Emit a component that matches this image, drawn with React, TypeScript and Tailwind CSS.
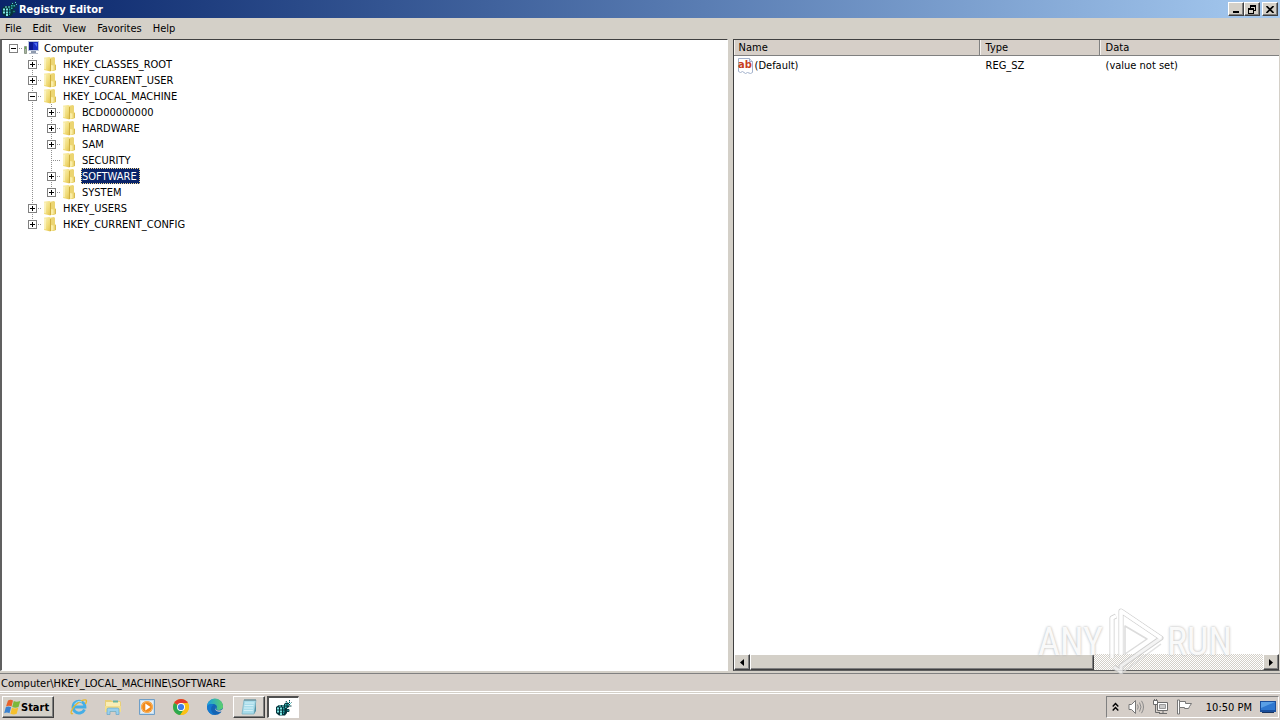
import React from "react";

const raised =
  "border border-t-white border-l-white border-r-[#404040] border-b-[#404040] shadow-[inset_-1px_-1px_0_#808080]";

function RegCubes({ size = 16 }: { size?: number }) {
  return (
    <svg width={size} height={size} viewBox="0 0 16 16" className="shrink-0" aria-hidden="true">
      <path d="M0 7l3-2h7l1 2v6l-2 2.500H3L0 13z" fill="#04323a" />
      <path d="M1 7.500h2v2H1zM4 7.500h2v2H4zM1 10.500h2v2H1zM4 10.500h2v2H4zM4 13h2v2H4zM3 5.500h2v1H3zM6 5.500h2v1H6z" fill="#7ce6e3" />
      <path d="M7 7.500h1.500v2H7zM7 10.500h1.500v2H7zM7 13h1v1H7z" fill="#26a5a8" />
      <path d="M8 4l2-1.500 3 .5v4l-3 2-2-1z" fill="#063a40" />
      <path d="M9 4h1.500v1.500H9zM11.500 4H13v1.500h-1.500zM9 6.500h1.500V8H9z" fill="#35b2b2" />
      <path d="M10 1l1 2M13.500 0v3M15.500 2.500L13 5M15.500 6H13M11 9.500h2v2h-2z" stroke="#08444a" fill="#38b5b5" />
      <path d="M13 1h1v1h-1zM10 2h1v1h-1zM14 3h1v1h-1z" fill="#62cfcf" />
    </svg>
  );
}

function ComputerIcon() {
  return (
    <svg width="17" height="16" viewBox="0 0 17 16" className="shrink-0" aria-hidden="true">
      <path d="M1.500 6.500h2v7h-2z" fill="#a9b59f" stroke="#8d9a88" />
      <path d="M2 7h1v2H2z" fill="#5fae4a" />
      <path d="M5 1h11v10H5z" fill="#bcc7dd" />
      <path d="M6 2h9v8H6z" fill="#1a2fc0" />
      <path d="M6 2h4v8H6z" fill="#0c1a92" />
      <path d="M11 3l3 0v4z" fill="#4f6ff0" />
      <path d="M8 11h5v2H8z" fill="#8d99ad" />
      <path d="M6 13h9v1H6z" fill="#b5bdc9" />
    </svg>
  );
}

function FolderIcon() {
  return (
    <svg width="16" height="16" viewBox="0 0 16 16" className="shrink-0" aria-hidden="true">
      <defs>
        <linearGradient id="fold" x1="0" x2="1" y1="0" y2="1">
          <stop offset="0" stopColor="#fbf3bd" />
          <stop offset="0.600" stopColor="#f1dc79" />
          <stop offset="1" stopColor="#e0c04c" />
        </linearGradient>
      </defs>
      <path d="M7 2l5-1 1 1v6l1 1v5l-2 1H7z" fill="#ecd572" />
      <path d="M2 1.500L7.500 1l1 1v13.500L2 14z" fill="url(#fold)" />
      <path d="M9 9l2.500 .5v4.500L9 15z" fill="#faeea8" />
      <path d="M8.500 3v12" stroke="#d0b040" fill="none" />
      <path d="M13.500 9v5" stroke="#d8bb52" />
      <path d="M3 3v10" stroke="#fefad8" />
    </svg>
  );
}

type Expander = "plus" | "minus" | "none";

function Guide({ up = true, down = true, branch = true, box = "none" }: {
  up?: boolean; down?: boolean; branch?: boolean; box?: Expander;
}) {
  return (
    <svg width="19" height="16" viewBox="0 0 19 16" className="block shrink-0" shapeRendering="crispEdges" aria-hidden="true">
      <g stroke="#909090" strokeDasharray="1 1" fill="none">
        {up && <path d="M9.500 0V8" />}
        {down && <path d="M9.500 8V16" />}
        {branch && <path d="M9 8.500H19" />}
      </g>
      {box !== "none" && (
        <>
          <path d="M5.500 4.500h8v8h-8z" fill="#fff" stroke="#808080" />
          <path d="M7 8.500h5" stroke="#000" />
          {box === "plus" && <path d="M9.500 6v5" stroke="#000" />}
        </>
      )}
    </svg>
  );
}

const nodes: { name: string; level: number; box: Expander; last?: boolean; selected?: boolean }[] = [
  { name: "Computer", level: 0, box: "minus" },
  { name: "HKEY_CLASSES_ROOT", level: 1, box: "plus" },
  { name: "HKEY_CURRENT_USER", level: 1, box: "plus" },
  { name: "HKEY_LOCAL_MACHINE", level: 1, box: "minus" },
  { name: "BCD00000000", level: 2, box: "plus" },
  { name: "HARDWARE", level: 2, box: "plus" },
  { name: "SAM", level: 2, box: "plus" },
  { name: "SECURITY", level: 2, box: "none" },
  { name: "SOFTWARE", level: 2, box: "plus", selected: true },
  { name: "SYSTEM", level: 2, box: "plus", last: true },
  { name: "HKEY_USERS", level: 1, box: "plus" },
  { name: "HKEY_CURRENT_CONFIG", level: 1, box: "plus", last: true },
];

function Tree() {
  return (
    <ul role="tree" aria-label="Registry keys" className="pl-[2px]">
      {nodes.map((n) => (
        <li key={n.name} role="treeitem" aria-selected={!!n.selected} aria-level={n.level + 1} className="flex h-4 items-center">
          {n.level > 0 && <span className="w-[19px] shrink-0" />}
          {n.level > 1 && <Guide branch={false} />}
          {n.box === "none" ? (
            <Guide />
          ) : (
            <button type="button" aria-label={`Toggle ${n.name}`} className="shrink-0">
              <Guide box={n.box} up={n.level > 0} down={n.level > 0 && !n.last} />
            </button>
          )}
          <span className="w-[19px] shrink-0">{n.level === 0 ? <ComputerIcon /> : <FolderIcon />}</span>
          <span
            className={
              n.selected
                ? "ml-px h-4 border border-dotted border-[#f5db95] bg-[#0a246a] pr-[2px] leading-4 text-white"
                : "ml-px h-4 border border-transparent pr-[2px] leading-4"
            }
          >
            {n.name}
          </span>
        </li>
      ))}
    </ul>
  );
}

function StringValueIcon() {
  return (
    <svg width="17" height="16" viewBox="0 0 17 16" className="shrink-0" aria-hidden="true">
      <path d="M1.500 .5h11l3 3v11l-2 1-3-1-2 1-3-2-2 1-2-1z" fill="#fff" stroke="#a3b2cc" />
      <path d="M12.500 .5v3h3" fill="#dfe6f2" stroke="#a3b2cc" />
      <text x="1" y="10" fontSize="11" fontWeight="700" fontFamily="DejaVu Sans Condensed, sans-serif" fill="#c8401f">ab</text>
    </svg>
  );
}

const cols = ["Name", "Type", "Data"];

function Values() {
  return (
    <table className="w-full table-fixed border-separate border-spacing-0 text-left">
      <colgroup>
        <col className="w-[246px]" />
        <col className="w-[120px]" />
        <col />
      </colgroup>
      <thead>
        <tr className="bg-[#d6cfc8]">
          {cols.map((c) => (
            <th
              key={c}
              scope="col"
              className="h-4 border-r border-b border-r-[#808080] border-b-[#808080] p-0 pt-px pl-[6px] leading-[14px] font-normal shadow-[inset_1px_0_0_#f4f1ed] first:pl-[5px] last:border-r-0"
            >
              {c}
            </th>
          ))}
        </tr>
      </thead>
      <tbody>
        <tr>
          <td className="p-0 pt-px pl-[3px]">
            <span className="flex items-center gap-px leading-[18px]"><StringValueIcon />(Default)</span>
          </td>
          <td className="p-0 pt-px pl-[6px] leading-[18px]">REG_SZ</td>
          <td className="p-0 pt-px pl-[6px] leading-[18px]">(value not set)</td>
        </tr>
      </tbody>
    </table>
  );
}

function ScrollBar() {
  const dither =
    "bg-[#fff] bg-[repeating-conic-gradient(#d4d0c8_0_25%,#ffffff_0_50%)] bg-[length:2px_2px]";
  return (
    <div className={`flex h-4 shrink-0 ${dither}`}>
      <button type="button" aria-label="Scroll left" className={`grid w-4 shrink-0 place-items-center bg-[#d4d0c8] ${raised}`}>
        <svg width="4" height="7" viewBox="0 0 4 7"><path d="M4 0v7L0 3.500z" /></svg>
      </button>
      <div className="flex min-w-0 flex-1">
        <div className={`w-[67%] bg-[#d4d0c8] ${raised}`} />
      </div>
      <button type="button" aria-label="Scroll right" className={`grid w-4 shrink-0 place-items-center bg-[#d4d0c8] ${raised}`}>
        <svg width="4" height="7" viewBox="0 0 4 7"><path d="M0 0v7l4-3.500z" /></svg>
      </button>
    </div>
  );
}

function Watermark() {
  const word =
    "pt-[4px] font-['Liberation_Sans_Narrow','Roboto_Condensed','Roboto',sans-serif] text-[38px] leading-[60px] text-white/90 [text-shadow:0_0_2px_#b4b4b4,0_0_3px_#c8c8c8]";
  return (
    <div className="pointer-events-none absolute right-[48px] bottom-[46px] flex items-center opacity-80">
      <span className={word}>ANY</span>
      <svg width="64" height="68" viewBox="0 0 64 68" fill="none" strokeLinejoin="round" aria-hidden="true">
        <g stroke="#c4c4c4" strokeWidth="5">
          <path d="M13 10L9 12V52" />
          <path d="M18 49V5L58 32 18 60V66L11 61" />
        </g>
        <path d="M18 49V5L58 32 18 60V66L11 61" stroke="#f2f2f2" strokeWidth="3" />
        <path d="M13 10L9 12V52M18 49V5L58 32" stroke="#ffffff" strokeWidth="3.500" />
        <path d="M22 20l22 13-22 15z" stroke="#d4d4d4" strokeWidth="1.500" />
        <path d="M20 66l38-28" stroke="#dadada" strokeWidth="1.500" />
      </svg>
      <span className={word}>RUN</span>
    </div>
  );
}

function WindowsFlag() {
  return (
    <svg width="17" height="16" viewBox="0 0 17 16" className="shrink-0" aria-hidden="true">
      <path d="M4 1.500q2.500-1.500 5 0L7.500 7.500q-2.500-1.500-5.500 0z" fill="#e8622a" />
      <path d="M9.800 2q2.500 1.500 6.500 0L14.500 8q-3 1.500-6.300 0z" fill="#7cb83a" />
      <path d="M1.800 8.300q2.500-1.500 5.300 0l-1.600 6q-2.500-1.500-5.300 0z" fill="#3b82d0" />
      <path d="M8 8.800q2.500 1.500 6.300 0l-1.600 6q-3 1.500-6.300 0z" fill="#f6c02c" />
    </svg>
  );
}

function IeIcon() {
  return (
    <svg width="18" height="18" viewBox="0 0 18 18" aria-hidden="true">
      <path d="M14.500 11.500A6 6 0 1 1 15 9H4.500" fill="none" stroke="#45aee6" strokeWidth="2.800" />
      <path d="M3 15.500C-.5 17 1 11 6 6.500S16.500 .5 16.500 3c0 1-.5 2-1 3" fill="none" stroke="#e7b92f" strokeWidth="1.300" />
      <path d="M4.500 6.500A5.500 5.500 0 0 1 12 4" fill="none" stroke="#a5dcf8" />
    </svg>
  );
}

function ExplorerIcon() {
  return (
    <svg width="18" height="18" viewBox="0 0 18 18" aria-hidden="true">
      <path d="M1 2h6l1 1h8l1 1v10H1z" fill="#e8cf78" />
      <path d="M2 4h14v9H2z" fill="#f9edb5" />
      <path d="M9 2.500h5v2H9z" fill="#67b3a0" />
      <path d="M1 8h16v6H1z" fill="#f3de8c" />
      <path d="M3 16.500v-5q0-1.500 1.500-1.500h9q1.500 0 1.500 1.500v5h-3v-3H6v3z" fill="#9ad0ec" stroke="#5a9fc8" strokeWidth=".6" />
    </svg>
  );
}

function PlayerIcon() {
  return (
    <svg width="18" height="18" viewBox="0 0 18 18" aria-hidden="true">
      <path d="M1.500 1.500h15v15h-15z" fill="#c5def0" stroke="#6f9fc8" />
      <path d="M3 3h12v12H3z" fill="#e6eef4" />
      <circle cx="9" cy="9" r="6" fill="#f18a1b" />
      <circle cx="9" cy="9" r="5.300" fill="none" stroke="#fbb864" />
      <path d="M7.300 5.500v7L12.500 9z" fill="#fff" />
    </svg>
  );
}

function ChromeIcon() {
  return (
    <svg width="18" height="18" viewBox="0 0 18 18" aria-hidden="true">
      <circle cx="9" cy="9" r="8" fill="#fbc116" />
      <path d="M9 9L2.100 5a8 8 0 0 1 13.800 0z" fill="#e33b2e" />
      <path d="M2.100 5A8 8 0 0 0 8.300 17L12.500 11 9 9z" fill="#2da94f" />
      <path d="M9 5h6.900A8 8 0 0 1 8.300 17L12 11z" fill="#fbc116" />
      <circle cx="9" cy="9" r="4" fill="#fff" />
      <circle cx="9" cy="9" r="3.100" fill="#3f7de8" />
    </svg>
  );
}

function EdgeIcon() {
  return (
    <svg width="18" height="18" viewBox="0 0 18 18" aria-hidden="true">
      <defs>
        <linearGradient id="edge" x1="0" x2="1">
          <stop offset="0" stopColor="#1b9de2" />
          <stop offset="1" stopColor="#5cd06a" />
        </linearGradient>
      </defs>
      <circle cx="9" cy="9" r="8" fill="#1464b4" />
      <path d="M1 9a8 8 0 0 1 16-1c.3 3-2 4-4.500 4-2 0-2.500-.8-2-1.500C12 8 9.500 6 7 6 4 6 1.500 7 1 9z" fill="url(#edge)" />
      <path d="M1 9c1-3.500 5-3.500 7-2-4 1-4 7 1 10A8 8 0 0 1 1 9z" fill="#1479cf" />
      <path d="M9.500 8.500c-1.200 2 .5 4.200 4 4 1.500 0 2.500-.7 3.500-1.500V14l-2-.6c-3 .9-6-.9-6-3z" fill="#d5cec8" />
    </svg>
  );
}

function NotepadIcon() {
  return (
    <svg width="18" height="18" viewBox="0 0 18 18" aria-hidden="true">
      <path d="M4 2h12l-2 14H2z" fill="#a8dcea" stroke="#7fb4c4" strokeWidth=".8" />
      <path d="M5 5h9M4.500 7.500h9M4 10h9M3.800 12.500h9" stroke="#d3f0f7" />
      <path d="M4.500 2h11" stroke="#5b7f88" strokeWidth="2" strokeDasharray="1 1" />
      <path d="M14 16l2-12v9z" fill="#4f93a8" />
    </svg>
  );
}

function TrayIcons() {
  return (
    <>
      <button type="button" aria-label="Show hidden icons" className="mr-[9px]">
        <svg width="7" height="10" viewBox="0 0 7 10" fill="none" stroke="#000" strokeWidth="1.400" className="block">
          <path d="M.7 4.500l2.800-3 2.800 3M.7 8.500l2.800-3 2.800 3" />
        </svg>
      </button>
      <button type="button" aria-label="Volume" className="mr-[7px]">
        <svg width="17" height="16" viewBox="0 0 17 16" className="block" fill="none" stroke="#8a8a8a">
          <path d="M1 5.500h2.500L7.500 1.500v13l-4-4H1z" fill="#fff" stroke="#777" />
          <path d="M9.500 5.500q1.500 2.500 0 5M11.500 3.500q3 4.500 0 9M13.500 1.800q4 6.200 0 12.400" />
        </svg>
      </button>
      <button type="button" aria-label="Network" className="mr-[7px]">
        <svg width="17" height="16" viewBox="0 0 17 16" className="block" fill="none" stroke="#6b6b6b">
          <path d="M5.500 3.500h10v8h-10z" fill="#fff" />
          <path d="M7.500 5.500h6v4h-6z" fill="#c9c9c9" stroke="#999" />
          <path d="M7 14.500h8M11 12v2" />
          <path d="M1.500 1.500h4v4h-4z" fill="#fff" />
          <path d="M2.500 0v2M4.500 0v2M3.500 6v7.500H8" />
        </svg>
      </button>
      <button type="button" aria-label="Action Center" className="mr-[13px]">
        <svg width="17" height="16" viewBox="0 0 17 16" className="block" stroke="#777">
          <path d="M1.500 1h2v14h-2z" fill="#fff" />
          <path d="M3.500 2.500h6v2h6l-2 3-1 2h-4V8.500h-5z" fill="#fff" />
        </svg>
      </button>
    </>
  );
}

const windowButton = `grid h-[14px] w-4 place-items-center bg-[#d4d0c8] ${raised}`;

export default function App() {
  return (
    <div className="relative flex h-screen flex-col overflow-hidden bg-[#d4d0c8] font-['DejaVu_Sans_Condensed','DejaVu_Sans',sans-serif] text-[11px] leading-[14px] text-black">
      <header className="flex h-[18px] shrink-0 items-center bg-linear-to-r from-[#0a246a] to-[#a6caf0] pr-[2px] pl-[2px]">
        <RegCubes />
        <h1 className="ml-px flex-1 pt-[2px] font-bold text-white">Registry Editor</h1>
        <button type="button" aria-label="Minimize" className={windowButton}>
          <svg width="9" height="8" viewBox="0 0 9 8"><path d="M1 6h6v2H1z" /></svg>
        </button>
        <button type="button" aria-label="Restore" className={windowButton}>
          <svg width="10" height="9" viewBox="0 0 10 9" shapeRendering="crispEdges">
            <path d="M3 0h6v6H7V5h1V2H4v1H3zM1 3h6v6H1zm1 2v3h4V5z" fillRule="evenodd" />
          </svg>
        </button>
        <button type="button" aria-label="Close" className={`ml-[2px] ${windowButton}`}>
          <svg width="8" height="7" viewBox="0 0 8 7"><path d="M.5 0l7 7M7.500 0l-7 7" stroke="#000" strokeWidth="1.600" /></svg>
        </button>
      </header>

      <nav aria-label="Menu bar" className="flex h-5 shrink-0 items-center pt-[2px]">
        {["File", "Edit", "View", "Favorites", "Help"].map((m) => (
          <button key={m} type="button" className="pr-[6px] pl-[5px]">{m}</button>
        ))}
      </nav>

      <main className="grid min-h-0 flex-1 grid-cols-[727fr_547fr] gap-[5px] pt-px">
        <section className="min-w-0 overflow-hidden border-t border-r border-b border-l-2 border-t-[#404040] border-r-white border-b-white border-l-[#606060] bg-white">
          <Tree />
        </section>
        <section className="flex min-w-0 flex-col border-t border-r border-b border-l border-t-[#404040] border-r-[#d4d0c8] border-b-[#606060] border-l-[#404040] bg-white">
          <div className="min-h-0 flex-1 overflow-hidden"><Values /></div>
          <ScrollBar />
        </section>
      </main>

      <div role="status" className="mt-[2px] h-[19px] shrink-0 border-t border-t-[#808080] border-b border-b-white bg-[#d6cfc9] pl-px leading-[19px]">
        Computer\HKEY_LOCAL_MACHINE\SOFTWARE
      </div>

      <footer className="mt-px flex h-[27px] shrink-0 items-center border-t border-t-white bg-[#d5cec8] pr-px pl-[2px]">
        <button type="button" className={`flex h-[22px] w-[52px] shrink-0 items-center bg-[#d4d0c8] pl-px text-[11px] font-bold ${raised}`}>
          <WindowsFlag /><span className="pt-px">Start</span>
        </button>
        <div className="ml-4 flex items-center gap-4">
          <button type="button" aria-label="Internet Explorer"><IeIcon /></button>
          <button type="button" aria-label="Windows Explorer"><ExplorerIcon /></button>
          <button type="button" aria-label="Media Player"><PlayerIcon /></button>
          <button type="button" aria-label="Chrome"><ChromeIcon /></button>
          <button type="button" aria-label="Edge"><EdgeIcon /></button>
        </div>
        <button type="button" aria-label="Notepad" className={`ml-[9px] grid h-[22px] w-8 place-items-center bg-[#d9d4ce] ${raised}`}>
          <NotepadIcon />
        </button>
        <button
          type="button"
          aria-label="Registry Editor"
          className="ml-[2px] grid h-[22px] w-8 place-items-center border-t-2 border-r border-b border-l-2 border-t-[#505050] border-r-white border-b-white border-l-[#505050] bg-white"
        >
          <RegCubes />
        </button>
        <div className="ml-auto flex h-[22px] items-center border border-t-[#808080] border-r-white border-b-white border-l-[#808080] pr-[2px] pl-[5px]">
          <TrayIcons />
          <time className="mr-[8px] pt-[2px]">10:50 PM</time>
          <button type="button" aria-label="Show desktop">
            <svg width="16" height="14" viewBox="0 0 16 14" className="block">
              <path d="M0 1h16v11H0z" fill="#1b4f9c" />
              <path d="M1 2h14v8H1z" fill="#2f78d0" />
              <path d="M1 2h14L1 8z" fill="#5aa0e6" />
              <path d="M2 12h12v1H2z" fill="#18335f" />
            </svg>
          </button>
        </div>
      </footer>

      <Watermark />
    </div>
  );
}
